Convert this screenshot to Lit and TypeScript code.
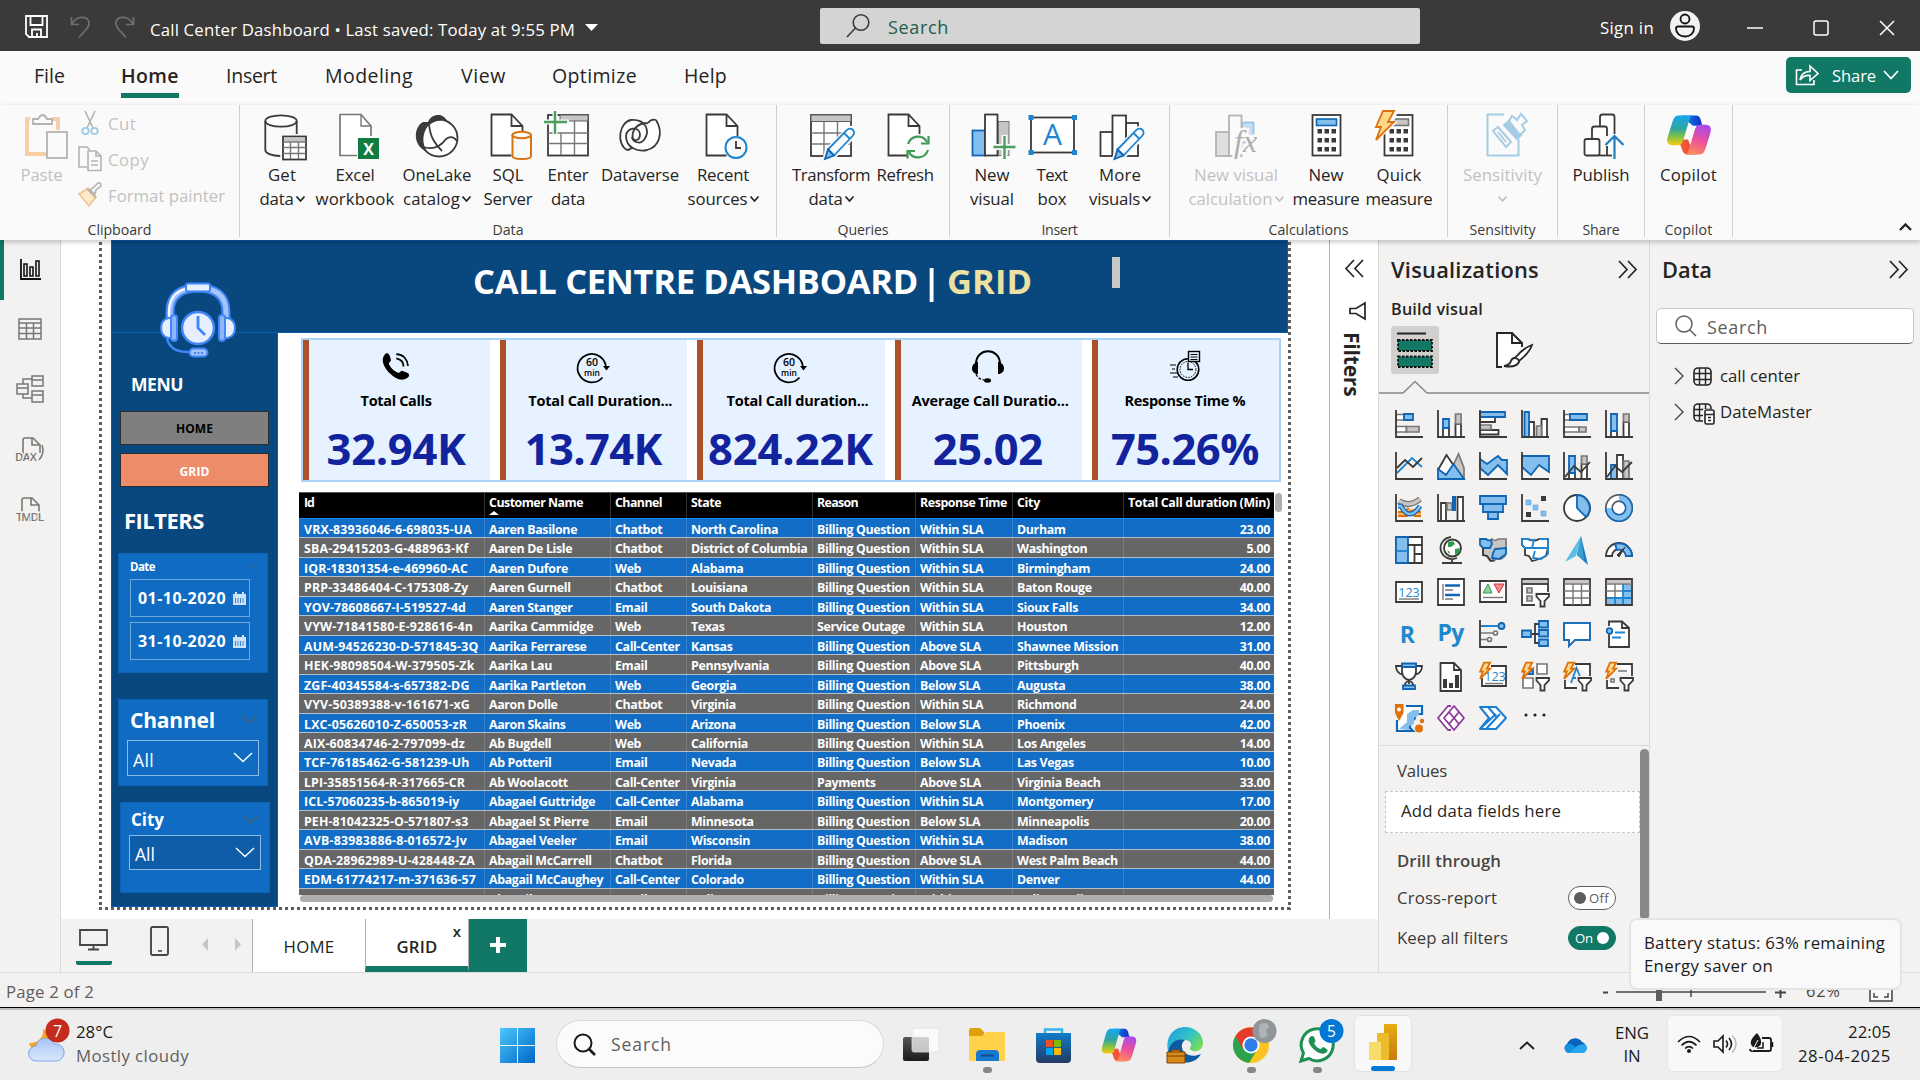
import { LitElement, html, svg, css, nothing, TemplateResult, SVGTemplateResult } from "lit";
import { customElement, property } from "lit/decorators.js";

/** Single-line label whose tracking is tuned so that it fills `w` pixels. */
@customElement("fit-text")
class FitText extends LitElement {
  @property({ type: Number }) w = 0;
  static styles = css`
    :host { display: inline-block; white-space: nowrap; flex: none; }
  `;
  async updated() {
    await document.fonts.ready;
    if (!this.w) return;
    this.style.letterSpacing = "0px";
    const n = (this.textContent || "").trim().length;
    const natural = this.getBoundingClientRect().width;
    if (n) this.style.letterSpacing = ((this.w - natural) / n).toFixed(3) + "px";
  }
  render() {
    return html`<slot></slot>`;
  }
}

const t = (text: string, w = 0, cls = "") => html`<fit-text class=${cls} .w=${w}>${text}</fit-text>`;

const icon = (w: number, h: number, body: SVGTemplateResult, cls = "", vb = "") =>
  html`<svg class="ico ${cls}" width=${w} height=${h} viewBox=${vb || `0 0 ${w} ${h}`}>${body}</svg>`;

/* ---------- shared glyph parts ---------- */
const page = (x = 8.5) => svg`<path class="dw" d="M${x + 31} 26V16L${x + 20} 4.5H${x}V45.5H${x + 20}"/><path class="d" d="M${x + 20} 4.5V16H${x + 31}"/>`;
const pencil = (dx = 0) => svg`<g transform="translate(${dx} 0)"><path fill="#fafafa" stroke="#fafafa" stroke-width="5" d="M19 49l2.500-9L42 19.500a4 4 0 0 1 6 5.500L28 46z"/><path class="s" fill="#fff" d="M22 39.500L41 20a4 4 0 0 1 6 5.500L28 45.500z"/><path class="b" d="M19 49l3-9.500 6 6z"/><path class="s" d="M38 23l6 6"/></g>`;
const bolt = (s = 1) => svg`<path transform="scale(${s})" d="M9 1H20L14 12H20L2 30L7 17H2Z" fill="#fcd98a" stroke="#e07008" stroke-width="${1.8 / s}"/>`;
const calc = (x: number, top: string, ts: string) => svg`<rect class="dw" x=${x} y="5" width="28" height="40.500"/><rect x=${x + 4} y="9" width="20" height="6.500" fill=${top} stroke=${ts} stroke-width="1.600"/>${[20, 29, 38].map((y) => [5, 12, 19].map((d) => svg`<rect x=${x + d} y=${y - 1} width="4.500" height="4.500" fill="#3b3a39"/>`))}`;
const funnel = svg`<path d="M15 16h13v3l-4.500 4.500V29h-4v-5.500L15 19z" fill="#f3f2f1" stroke="#f3f2f1" stroke-width="4"/><path class="dw" d="M15.500 16h12.500v2.500l-4.500 4.500V28.500h-4v-5.500l-4-4.500z"/>`;
const copilot = (id: string) => svg`
  <defs>
    <linearGradient id="${id}a" x1="0" y1="0" x2="0" y2="1"><stop offset="0" stop-color="#17a5f0"/><stop offset=".45" stop-color="#2fa7a0"/><stop offset=".75" stop-color="#8fc43c"/><stop offset="1" stop-color="#fcc90e"/></linearGradient>
    <linearGradient id="${id}b" x1=".6" y1="0" x2=".3" y2="1"><stop offset="0" stop-color="#a94be6"/><stop offset=".5" stop-color="#ee4f9a"/><stop offset="1" stop-color="#fd8f5c"/></linearGradient>
    <linearGradient id="${id}c"><stop offset="0" stop-color="#1b8df0"/><stop offset="1" stop-color="#0a2fc4"/></linearGradient>
    <linearGradient id="${id}d"><stop offset="0" stop-color="#f0622c"/><stop offset="1" stop-color="#f5424f"/></linearGradient>
  </defs>
  <path d="M15 1H30c3 0 4 2 5 5l1.500 6H27L20 6z" fill="url(#${id}c)"/>
  <path d="M12 27l4 11c1 3 2 5 5 5h11c-4 0-5-2-6-5l-4-11z" fill="url(#${id}d)"/>
  <path d="M13 1h15c-3 0-4 2-5 6l-6 21c-1.500 4.500-3 5-6 5H6c-5 0-6-4-5-8L6 8c1.500-5 3-7 7-7z" fill="url(#${id}a)"/>
  <path d="M33 43H18c3 0 4-2 5-6l6-21c1.500-4.500 3-5 6-5h5c5 0 6 4 5 8l-5 17c-1.500 5-3 7-7 7z" fill="url(#${id}b)"/>`;

/* ---------- ribbon ---------- */
interface Item { w: number; lines: [string, number, boolean?][]; art: SVGTemplateResult; off?: boolean }
interface Group { w: number; pad: number; label: string; lw: number; items: Item[] }

const dataGroups: Group[] = [
  {
    w: 537, pad: 8, label: "Data", lw: 31, items: [
      { w: 68, lines: [["Get", 28], ["data", 34, true]], art: svg`<ellipse class="dw" cx="24" cy="11" rx="15.700" ry="5.700"/><path class="d" d="M8.300 11V40c0 3 6 6 15 6M39.700 11v13"/><rect class="dw" x="26" y="26.500" width="23" height="23"/><rect x="27" y="27.500" width="21" height="4" fill="#c8c6c4"/><path class="g1" d="M26 32h23M26 37.500h23M26 43.500h23M33.500 32v17M41.500 32v17"/>` },
      { w: 78, lines: [["Excel", 39], ["workbook", 79]], art: svg`<path class="gw" d="M41 26V16L31 4.500H10V45.500H27"/><path class="g1" d="M31 4.500V16H41"/><rect x="28" y="28" width="21" height="21" fill="#107c41"/><text x="38.500" y="44.500" text-anchor="middle" class="xl">X</text>` },
      { w: 86, lines: [["OneLake", 69], ["catalog", 57, true]], art: svg`<circle class="dw" cx="27" cy="28" r="18.500"/><path fill="#3b3a39" d="M16 12C19 4 31 2 35 11c-7-2-13 0-19 5-6 8-6 18-1 25C2 38 0 18 11 12z"/><path class="d" d="M17 14c1 13 6 20 13 27M11 37c10 3 18-1 23-8 5-4 9-1 11 2"/>` },
      { w: 56, lines: [["SQL", 31], ["Server", 49]], art: svg`${page(8.5)}<path d="M29.500 25v21c0 4 18.500 4 18.500 0V25" fill="#fafafa" stroke="#d9730d" stroke-width="2"/><ellipse cx="38.700" cy="25" rx="9.300" ry="3.200" fill="#fff" stroke="#d9730d" stroke-width="2"/>` },
      { w: 64, lines: [["Enter", 41], ["data", 34]], art: svg`<rect class="dw" x="5" y="5" width="40" height="40.500"/><rect x="17" y="5" width="28" height="6" fill="#c8c6c4" stroke="#605e5c"/><path class="g1" d="M5 23H45M5 33.500H45M18 23V45M31.500 11V45"/><path d="M2 12H26M12 2V26" stroke="#fafafa" stroke-width="5"/><path d="M1 12H24M12 1V24" stroke="#4a9f5f" stroke-width="2.400"/>` },
      { w: 80, lines: [["Dataverse", 78]], art: svg`<path class="dw" d="M12 40C1 34 4 12 16 10c14-1 20 10 13 20-4 5-11 2-12-3 2 5 8 4 8-3-1-8-13-7-14 2 0 12 12 16 21 14 12-3 17-17 9-30M12 40c3 0 4-1 5-3"/><path class="d" d="M33 13c-12 0-17 8-15 17M41 10c-3-1-6 0-8 3"/>` },
      { w: 86, lines: [["Recent", 52], ["sources", 60, true]], art: svg`${page(8.5)}<circle cx="38" cy="37.500" r="10.500" fill="#fafafa" stroke="#1f85d0" stroke-width="2"/><path class="d" d="M38 31v7h5"/>` },
    ],
  },
  {
    w: 173, pad: 15, label: "Queries", lw: 51, items: [
      { w: 78, lines: [["Transform", 78], ["data", 34, true]], art: svg`<rect class="dw" x="5" y="5" width="40" height="41"/><rect x="5" y="5" width="40" height="6.500" fill="#c8c6c4" stroke="#605e5c"/><path class="g1" d="M5 23H45M5 34H45M18 12V45M31.500 12V45"/>${pencil()}` },
      { w: 70, lines: [["Refresh", 57]], art: svg`${page(8.5)}<circle cx="38" cy="37" r="13" fill="#fafafa"/><g fill="none" stroke="#3f9a55" stroke-width="2.200"><path d="M28 34c3-9 15-10 19-2M48 40c-3 9-15 10-19 2"/><path d="M48.500 26v7.500H41M27.500 48.500V41H35"/></g>` },
    ],
  },
  {
    w: 220, pad: 17, label: "Insert", lw: 36, items: [
      { w: 50, lines: [["New", 35], ["visual", 44]], art: svg`<rect x="5.500" y="20.500" width="12.500" height="25" class="b"/><rect x="31" y="11.500" width="11" height="34" fill="#c8c6c4" stroke="#797775"/><rect class="dw" x="18" y="4.500" width="12.500" height="41"/><path d="M25 37H50M37.500 25V50" stroke="#fafafa" stroke-width="6"/><path d="M26.500 37H48.500M37.500 26V49" stroke="#4a9f5f" stroke-width="2.400"/>` },
      { w: 70, lines: [["Text", 31], ["box", 29]], art: svg`<rect class="dw" x="4" y="7.500" width="43" height="35"/><g fill="#1f85d0"><path d="M1.500 5h5v5h-5zM45 5h5v5h-5zM1.500 40h5v5h-5zM45 40h5v5h-5z"/></g><text x="25.500" y="35" text-anchor="middle" class="bigA">A</text>` },
      { w: 66, lines: [["More", 42], ["visuals", 51, true]], art: svg`<rect class="dw" x="5.500" y="22" width="12" height="24"/><rect class="dw" x="31" y="13" width="12" height="33"/><rect class="dw" x="17.500" y="5.500" width="13.500" height="40.500"/>${pencil(0.5)}` },
    ],
  },
  {
    w: 278, pad: 11, label: "Calculations", lw: 80, items: [
      { w: 110, off: true, lines: [["New visual", 84], ["calculation", 84, true]], art: svg`<rect x="5" y="22" width="13" height="24" fill="#e1dfdd" stroke="#b5b3b1" stroke-width="1.800"/><rect x="31" y="12.500" width="11.500" height="20" fill="#c6def3" stroke="#9bc3e6" stroke-width="1.800"/><rect x="18" y="5.500" width="12.500" height="40.500" fill="#fafafa" stroke="#b5b3b1" stroke-width="1.800"/><text x="23" y="42" class="fx" stroke="#fafafa" stroke-width="5">fx</text>` },
      { w: 70, lines: [["New", 35], ["measure", 67]], art: calc(11.5, "#83beec", "#1065b5") },
      { w: 76, lines: [["Quick", 45], ["measure", 67]], art: svg`${calc(10.5, "#c8c6c4", "#797775")}<path d="M9 0H22L16 14H18L0 31" stroke="#fafafa" stroke-width="5" fill="#fafafa"/>${bolt()}` },
    ],
  },
  {
    w: 110, pad: 0, label: "Sensitivity", lw: 66, items: [
      { w: 110, off: true, lines: [["Sensitivity", 79], ["", 0, true]], art: svg`<g fill="none" stroke="#a6cde5" stroke-width="2"><path d="M26 4.500H9.500V45.500H40.500V29"/><path d="M15 21l5-4 13 15-5 5zM20 22l8 10"/><path fill="#a6cde5" d="M26 15l5-4 12 14-4 4z"/><path fill="#fafafa" d="M31 11l3-5 5 4 4-6 6 7-5 4 3 5-5 5z"/></g>` },
    ],
  },
  {
    w: 87, pad: 0, label: "Share", lw: 37, items: [
      { w: 86, lines: [["Publish", 57]], art: svg`<g class="dw"><path d="M24 17V7q0-2.500 2.500-2.500H36q2.500 0 2.500 2.500V24"/><path d="M16 28V19q0-2.500 2.500-2.500H29q2 0 2 2.500V26M31 36v9.500"/><rect x="8.500" y="29" width="15" height="16.500" rx="2"/><path d="M23 45.500H36"/></g><path d="M38.500 49V26M29.500 35l9-9 9 9" fill="none" stroke="#1f7fc0" stroke-width="2.200"/>` },
    ],
  },
  {
    w: 88, pad: 0, label: "Copilot", lw: 48, items: [
      { w: 87, lines: [["Copilot", 57]], art: svg`<g transform="translate(2.500 4.500) scale(.98 .93)">${copilot("rb")}</g>` },
    ],
  },
];

/* ---------- gallery of visuals, 28px cells ---------- */
const ax = svg`<path class="d" d="M1 0V27H28"/>`;
const visuals: SVGTemplateResult[] = [
  svg`<path class="gw" d="M1 4.500H9V10H1zM1 16.500H11.500V22H1z"/><path class="b" d="M9 4H18V10H9z"/><path class="gf" d="M11.500 16.500H24V22H11.500z"/>${ax}`,
  svg`<path class="dw" d="M6 17H12V27H6zM18.500 14H24V27H18.500z"/><path class="b" d="M6 9H12V18H6z"/><path class="gf" d="M18.500 4H24V14H18.500z"/>${ax}`,
  svg`<path class="dw" d="M1 7H16V12H1zM1 20H19.500V24.500H1z"/><path class="gf" d="M1 15H12V19.500H1z"/><path class="b" d="M1 2H26V7H1z"/>${ax}`,
  svg`<path class="dw" d="M8 12H13V27H8zM20.500 9H26V27H20.500z"/><path class="gf" d="M15.500 16H20.500V27H15.500z"/><path class="b" d="M3.500 2H8V27H3.500z"/>${ax}`,
  svg`<path class="gw" d="M1 4.500H7V10H1zM1 17H16V22H1z"/><path class="b" d="M7 4H24V10H7z"/><path class="gf" d="M16 17H23V22H16z"/>${ax}`,
  svg`<path class="dw" d="M6 21H12V27H6zM18.500 12H24V27H18.500z"/><path class="b" d="M6 4H12V21H6z"/><path class="gf" d="M18.500 4H24V12H18.500z"/>${ax}`,
  svg`<path class="s" d="M2 21L17 6 27 15"/><path class="d" d="M2 16L10 8 18 15 27 6"/>${ax}`,
  svg`<path class="gf" d="M15 16L21.500 2 27 16V26z"/><path class="dw" d="M1 18L9.500 3 17 14 9 23z"/><path class="b" d="M1 17L9 23 16.500 12 27 27H1z"/>`,
  svg`<path class="b" d="M1 7L8 12 19 4 23 8H28V22L19 13 9 23 1 16z"/>${ax}`,
  svg`<path class="b" d="M1 4H28V20L18 13 10 23 1 15z"/>${ax}`,
  svg`<path class="dw" d="M6 21H12V27H6zM18.500 12H24V27H18.500z"/><path class="b" d="M6 4H12V21H6z"/><path class="gf" d="M18.500 4H24V12H18.500z"/><path class="d" d="M2 25L11 14 18 20 27 10"/>${ax}`,
  svg`<path class="b" d="M6 13H12V27H6z"/><path class="dw" d="M12 3H18V27H12z"/><path class="gf" d="M18.500 9H24V27H18.500z"/><path class="d" d="M2 25L10 14 17 20 27 10"/>${ax}`,
  svg`<path d="M3 20H11L15 15M19 15L21 20H26" fill="none" stroke="#e07008" stroke-width="6"/><path d="M3 20H11L15 15M19 15L21 20H26" fill="none" stroke="#fbb65c" stroke-width="2"/><path d="M4 7Q14 14 25 5" fill="none" stroke="#797775" stroke-width="6"/><path d="M4 7Q14 14 25 5" fill="none" stroke="#c8c6c4" stroke-width="3.500"/><path d="M3 12H6Q10 20 15 20T25 12" fill="none" stroke="#1065b5" stroke-width="5"/><path d="M3 12H6Q10 20 15 20T25 12" fill="none" stroke="#83beec" stroke-width="2.500"/>${ax}`,
  svg`<path class="dw" d="M4 9H9V27H4zM20.500 3H26V27H20.500z"/><path class="gf" d="M10 9H15V16H10z"/><path d="M15 2H19V17H15z" fill="#1065b5"/>${ax}`,
  svg`<path class="b" d="M1 2H27V10H1z"/><path class="b" d="M4 10H24V18H4z"/><path class="b" d="M9 18H19V25H9z"/>`,
  svg`<path d="M20 2h5v5h-5zM5 18h5v5H5z" fill="#3b3a39"/><path d="M5 6h5v5H5zM12 11h5v5h-5zM20 17h5v5h-5z" fill="#83beec" stroke="#5aa3df" stroke-width=".6"/>${ax}`,
  svg`<circle class="dw" cx="14" cy="14" r="13"/><path class="b" d="M14 14V1A13 13 0 0 1 23 23z"/>`,
  svg`<circle cx="14" cy="14" r="10" fill="#fff" stroke="#605e5c" stroke-width="8"/><circle cx="14" cy="14" r="10" fill="none" stroke="#fff" stroke-width="4.600"/><path d="M14 4A10 10 0 1 1 4 14" fill="none" stroke="#1065b5" stroke-width="8"/><path d="M14 4A10 10 0 1 1 4 14" fill="none" stroke="#83beec" stroke-width="5"/>`,
  svg`<path class="dw" d="M1 1H27V27H1z"/><path class="b" d="M1 1H13V27H1z"/><path class="d" d="M13 9H27M19.500 9V27M19.500 18H27"/><path class="s" d="M1 15H13"/>`,
  svg`<circle cx="15.500" cy="12" r="8.500" class="dw"/><path d="M11 6l5-1 2 3-4 3-3 0zM18 13l5-1-1 5-4 2zM10 14l3 2-1 2z" fill="#2f9a4c"/><path class="d" d="M14 1C6 2 2 9 4 15s9 10 16 7M15 23v3M5 27H25"/>`,
  svg`<path class="gf" d="M13 3Q16 6 19 3H27V12L26 20 22 23 18 22 15 25 11 25 8 20 4 19V12z"/><path class="b" d="M1 3H7Q9 5 12 4L13 8 11 12H4L1 9z"/><path class="b" d="M16 13L27 12V18L20 23 13 22 14 17z"/><path class="d" d="M4 12V19L8 20 12 25 15 24"/>`,
  svg`<path class="dw" d="M1 3H7Q14 6 18 3H27V12L25 20 21 22 15 24 11 25 8 20 4 19V12L1 9z"/><path class="s" d="M1 3H7Q9 5 13 4L11 12H4L1 9V3M11 12H27M18 3H27V18L20 23 12 22L14 15"/>`,
  svg`<path d="M18 0L13 20 2 26z" fill="#59bfe6"/><path d="M18 0L14 19 25 29z" fill="#1f7cc8"/><path d="M14 19L18 0 21 24z" fill="#3aa0d0"/>`,
  svg`<path class="dw" d="M1 20A13 13 0 0 1 27 20H21A7 7 0 0 0 7 20z"/><path class="b" d="M10 8A13 13 0 0 1 27 20H21A7 7 0 0 0 12 14z"/><path d="M20 11L14 21 12 19z" fill="#3b3a39" stroke="#3b3a39"/>`,
  svg`<path class="dw" d="M1 4H27V24H1z"/><text x="14" y="18.500" text-anchor="middle" class="n123">123</text><path class="g1" d="M4 21H24"/>`,
  svg`<path class="dw" d="M1 1H27V27H1z"/><path d="M6 6V22" class="g1"/><path d="M8 7.500H23M8 17H23" stroke="#1065b5" stroke-width="2.500"/><path class="g1" d="M8 12H16M8 21H16"/>`,
  svg`<path class="dw" d="M1 3H27V24H1z"/><path d="M4 15L9 6l4 9z" fill="#8ed09c" stroke="#2f9a4c"/><path d="M15 6h10l-5 9z" fill="#f28b8b" stroke="#d13438"/><path class="g1" d="M4 19.500H24"/>`,
  svg`<path class="dw" d="M14 27H1V1H27V14"/><path d="M1.500 2H26.500V6H1.500z" fill="#c8c6c4"/><path class="d" d="M1 6H27"/><path class="gf" d="M6 10h5v5H6zM6 18h5v5H6z"/>${funnel}`,
  svg`<path class="dw" d="M1 1H27V27H1z"/><path d="M2 2H26V5.500H2z" fill="#c8c6c4"/><path class="g1" d="M1 6H27M1 13H27M1 20H27M10 6V27M18.500 6V27"/>`,
  svg`<path class="dw" d="M1 1H27V27H1z"/><path d="M2 2H26V5.500H2z" fill="#c8c6c4"/><path d="M18 6H26V26H2V20H18z" fill="#83beec"/><path class="g1" d="M1 6H27M1 13H18M10 6V20"/><path class="s" d="M2 20H26M18 6V26M18 13H26M10 20V26"/>`,
  svg`<text x="12" y="22.500" text-anchor="middle" class="rpy">R</text>`,
  svg`<text x="13.500" y="20.500" text-anchor="middle" class="rpy">Py</text>`,
  svg`${ax}<path d="M2 6H20" stroke="#1f85d0" stroke-width="2"/><circle class="b" cx="22.500" cy="6" r="3"/><path class="g1" d="M2 13H14M2 19.500H8"/><circle class="gw" cx="16.500" cy="13" r="2"/><circle class="gw" cx="10.500" cy="19.500" r="2"/>`,
  svg`<path class="d" d="M10 14H18M18 4H14V23H18M14 14H18"/><path class="b" d="M1 10.500H10V17H1zM18 1H27V7.500H18zM18 10H27V16.500H18zM18 19.500H27V26H18z"/>`,
  svg`<path d="M1 3H27V20H12L6 26V20H1z" fill="#fff" stroke="#1f6fb8" stroke-width="2"/>`,
  svg`<path class="dw" d="M4 6V1.500H17L24 8V27H4V14"/><path class="d" d="M17 1.500V8H24"/><circle class="b" cx="4.500" cy="11" r="2.800"/><path class="s" d="M10 12.500H20M7 17.500H16"/>`,
  svg`<path class="dw" d="M7 2H21V10Q20 17 14 18 8 17 7 10zM7 4H1Q1 11 8 13M21 4H27Q27 11 20 13"/><path class="d" d="M14 18V22"/><path class="b" d="M7 1.500H21V5H7zM8 23.500H20V27H8z"/><path class="d" d="M10 23Q10 20 14 19 18 20 18 23"/>`,
  svg`<path class="dw" d="M3.500 1H17L24 8V29H3.500z"/><path class="d" d="M17 1V8H24"/><path d="M6 17h4v9H6zM12 21h4v5h-4zM18 13h4v13h-4z" fill="#3b3a39"/>`,
  svg`<path class="dw" d="M12 4H27V24H3V16"/><text x="16" y="19" text-anchor="middle" class="n123">123</text><path class="g1" d="M6 21.500H24"/>${bolt(0.56)}`,
  svg`<path class="gw" d="M16 2H26V12H16zM2 16H12V26H2zM16 16H20"/><path class="b" d="M6 12L12 7V12z"/>${funnel}${bolt(0.56)}`,
  svg`<path class="dw" d="M12 2H27V14M2 18V26H14"/><path class="s" d="M8 21L13.500 6 18 17M10 16H16"/>${funnel}${bolt(0.56)}`,
  svg`<path class="dw" d="M12 2H27V14M2 18V26H14"/><path class="g1" d="M13 9H22M13 18H15"/><path class="gw" d="M6 17h3v3H6z"/>${funnel}${bolt(0.56)}`,
  svg`<path d="M2 16V27H18L15 24V20L20 14V10H27V2H11" fill="#fff" stroke="#1065b5" stroke-width="2.200"/><path d="M4 25L12 18V10L18 6H24V11L19 14V20L14 22V26" fill="#83beec"/><path d="M0 0H8.500V9L4 17 0 9z" fill="#e07008"/><circle cx="4" cy="5.500" r="2" fill="#fff"/><circle cx="24" cy="24.500" r="4" fill="#e07008"/><circle cx="27" cy="17" r="2.200" fill="#e07008"/>`,
  svg`<g fill="#fff" stroke="#8b3a9b" stroke-width="1.800" stroke-linejoin="round"><path d="M14 2H11L1 14 11 26H14"/><path d="M17 2L27 14 17 26 7 14z"/><path d="M12 8L22 20M22 8L12 20"/></g>`,
  svg`<g fill="#fff" stroke="#1a7fd4" stroke-width="2" stroke-linejoin="round"><path d="M1 3H17L27 14 17 25H1L10 14z"/><path d="M9 3L18 13.500M1 25L17 10M7 25L21 10"/></g>`,
  svg`<g fill="#252423"><circle cx="5" cy="11" r="1.600"/><circle cx="14" cy="11" r="1.600"/><circle cx="23" cy="11" r="1.600"/></g>`,
];

/* ---------- report table ---------- */
const columns: [string, number, number][] = [
  ["Id", 186, 10], ["Customer Name", 126, 94], ["Channel", 76, 47], ["State", 126, 30],
  ["Reason", 103, 41], ["Response Time", 97, 87], ["City", 111, 23], ["Total Call duration (Min)", 150, 142],
];
const BQ = "Billing Question";
const W = "Within SLA", A = "Above SLA", B = "Below SLA";
const rows: string[][] = [
  ["VRX-83936046-6-698035-UA", "Aaren Basilone", "Chatbot", "North Carolina", BQ, W, "Durham", "23.00"],
  ["SBA-29415203-G-488963-Kf", "Aaren De Lisle", "Chatbot", "District of Columbia", BQ, W, "Washington", "5.00"],
  ["IQR-18301354-e-469960-AC", "Aaren Dufore", "Web", "Alabama", BQ, W, "Birmingham", "24.00"],
  ["PRP-33486404-C-175308-Zy", "Aaren Gurnell", "Chatbot", "Louisiana", BQ, W, "Baton Rouge", "40.00"],
  ["YOV-78608667-I-519527-4d", "Aaren Stanger", "Email", "South Dakota", BQ, W, "Sioux Falls", "34.00"],
  ["VYW-71841580-E-928616-4n", "Aarika Cammidge", "Web", "Texas", "Service Outage", W, "Houston", "12.00"],
  ["AUM-94526230-D-571845-3Q", "Aarika Ferrarese", "Call-Center", "Kansas", BQ, A, "Shawnee Mission", "31.00"],
  ["HEK-98098504-W-379505-Zk", "Aarika Lau", "Email", "Pennsylvania", BQ, A, "Pittsburgh", "40.00"],
  ["ZGF-40345584-s-657382-DG", "Aarika Partleton", "Web", "Georgia", BQ, B, "Augusta", "38.00"],
  ["VYV-50389388-v-161671-xG", "Aaron Dolle", "Chatbot", "Virginia", BQ, W, "Richmond", "24.00"],
  ["LXC-05626010-Z-650053-zR", "Aaron Skains", "Web", "Arizona", BQ, B, "Phoenix", "42.00"],
  ["AIX-60834746-2-797099-dz", "Ab Bugdell", "Web", "California", BQ, W, "Los Angeles", "14.00"],
  ["TCF-76185462-G-581239-Uh", "Ab Potteril", "Email", "Nevada", BQ, B, "Las Vegas", "10.00"],
  ["LPI-35851564-R-317665-CR", "Ab Woolacott", "Call-Center", "Virginia", "Payments", A, "Virginia Beach", "33.00"],
  ["ICL-57060235-b-865019-iy", "Abagael Guttridge", "Call-Center", "Alabama", BQ, W, "Montgomery", "17.00"],
  ["PEH-81042325-O-571807-s3", "Abagael St Pierre", "Email", "Minnesota", BQ, B, "Minneapolis", "20.00"],
  ["AVB-83983886-8-016572-Jv", "Abagael Veeler", "Email", "Wisconsin", BQ, W, "Madison", "38.00"],
  ["QDA-28962989-U-428448-ZA", "Abagail McCarrell", "Chatbot", "Florida", BQ, A, "West Palm Beach", "44.00"],
  ["EDM-61774217-m-371636-57", "Abagail McCaughey", "Call-Center", "Colorado", BQ, W, "Denver", "44.00"],
  ["LGD-68412393-S-544308-SS", "Abagail McKern", "Email", "Indiana", BQ, W, "Indianapolis", "31.00"],
];
const idWidths = [168, 164.5, 164, 164.5, 162, 169, 174.5, 170.5, 165.5, 166, 163, 161, 165.5, 161, 155.5, 164.5, 163, 171, 172, 164];

/* ---------- KPI cards ---------- */
const sixty = svg`<path d="M29 18A14.200 14.200 0 1 0 25.500 27.500" fill="none" stroke="#000" stroke-width="1.800"/><path d="M26 16h7l-3.500 4.500z"/><text x="15" y="16" text-anchor="middle" class="k60">60</text><text x="15" y="25.500" text-anchor="middle" class="kmin">min</text>`;
const kpis: { title: string; tw: number; value: string; vw: number; shift: number; art: SVGTemplateResult }[] = [
  { title: "Total Calls", tw: 71, value: "32.94K", vw: 139, shift: 0, art: svg`<g transform="translate(1 2) scale(.9)"><path d="M4 3c3-3 5-1 6 2l1 4c0 2-3 3-2 5 3 5 5 7 10 9 2 1 3-3 5-2l5 2c3 1 3 4 0 6-6 4-13 1-19-5S-1 9 4 3z"/><path d="M17 7c5 1 8 4 8 9M17 2.500c8 0 12.500 6 13 13" fill="none" stroke="#000" stroke-width="2"/></g>` },
  { title: "Total Call Duration...", tw: 144, value: "13.74K", vw: 137, shift: 14, art: sixty },
  { title: "Total Call duration...", tw: 142, value: "824.22K", vw: 165, shift: 14, art: sixty },
  { title: "Average Call Duratio...", tw: 157, value: "25.02", vw: 110, shift: 5, art: svg`<path d="M4 14C4-3 28-3 28 14" fill="none" stroke="#000" stroke-width="2"/><path d="M6 12v12C-2 24-2 13 6 12zM26 12v12c8 0 8-11 0-12z"/><path d="M4 24q2 5 8 6" fill="none" stroke="#000" stroke-dasharray="3 1.500" stroke-width="1.200"/><ellipse cx="15.500" cy="30.500" rx="3.500" ry="2.200"/>` },
  { title: "Response Time %", tw: 121, value: "75.26%", vw: 148, shift: 0, art: svg`<g fill="none" stroke="#000" transform="translate(1 0)"><circle cx="18" cy="19.500" r="10.800" stroke-width="1.500"/><circle cx="18" cy="19.500" r="8" stroke-width="1" stroke-dasharray="1.500 1.200"/><path d="M18 12.500v7h5" stroke-width="1.300"/><path d="M0 15H6M2 19H5M0 23H7M3 27H8" stroke-width="1.200"/><rect x="18.500" y="1.500" width="11" height="10" fill="#e6f2ff" stroke-width="1.400"/><path d="M20.500 4.500h7M20.500 7h7M20.500 9.500h7"/></g>` },
];

const chev = (w: number, h: number, color: string, sw = 1.5) =>
  icon(w, h, svg`<path d="M1 1L${w / 2} ${h - 1.5}L${w - 1} 1" fill="none" stroke=${color} stroke-width=${sw}/>`);
const calIcon = icon(13, 13, svg`<path d="M0 2H13V13H0z" fill="#cfe3f7"/><path d="M2 0h2v2H2zM9 0h2v2H9z" fill="#cfe3f7"/><path d="M2.500 6v5M5 6v5M7.500 6v5M10 6v5" stroke="#3d83c9" stroke-width="1"/>`);

@customElement("app-root")
class AppRoot extends LitElement {
  static styles = css`
    :host { display: block; width: 1920px; height: 1080px; overflow: hidden; font-family: "Open Sans", "Noto Sans", sans-serif; font-size: 16.8px; color: #252423; background: #f3f2f1; }
    * { box-sizing: border-box; }
    .app { display: flex; flex-direction: column; width: 1920px; height: 1080px; }
    .ico { display: block; flex: none; overflow: visible; }
    .row { display: flex; align-items: center; }
    .d { fill: none; stroke: #3b3a39; stroke-width: 1.8; }
    .dw { fill: #fff; stroke: #3b3a39; stroke-width: 1.8; }
    .g1 { fill: none; stroke: #797775; stroke-width: 1.4; }
    .gw { fill: #fff; stroke: #797775; stroke-width: 1.7; }
    .gf { fill: #c8c6c4; stroke: #797775; stroke-width: 1.7; }
    .b { fill: #83beec; stroke: #1065b5; stroke-width: 1.8; }
    .s { fill: none; stroke: #1f85d0; stroke-width: 1.8; }
    .xl { font: 700 16px "Open Sans", sans-serif; fill: #fff; }
    .bigA { font: 400 30px "Open Sans", sans-serif; fill: #1f85d0; }
    .fx { font: italic 32px "Liberation Serif", serif; fill: #b0aeac; paint-order: stroke; }
    .n123 { font: 400 12.5px "Open Sans", sans-serif; fill: #1f85d0; }
    .rpy { font: 700 23px "Open Sans", sans-serif; fill: #2187cf; letter-spacing: -0.8px; }
    .k60 { font: 600 10.5px "Open Sans", sans-serif; }
    .kmin { font: 600 8.5px "Open Sans", sans-serif; }

    /* title bar */
    .title { height: 51px; background: #3b3a39; color: #fff; display: flex; align-items: center; flex: none; }
    .title .save { margin: 2px 0 0 25px; }
    .title .undo { margin: 3px 0 0 22px; }
    .title .redo { margin: 3px 0 0 23px; }
    .title .name { margin: 7px 0 0 15px; }
    .title .caret { margin: 3px 0 0 10px; }
    .title .search { margin-left: 222px; margin-top: 1px; width: 600px; height: 36px; background: #d4d4d2; border-radius: 2px; color: #1f5c4f; font-size: 18px; padding-left: 26px; gap: 18px; }
    .title .search fit-text { margin-top: 2px; }
    .title .sign { margin: 3px 0 0 180px; }
    .title .avatar { margin-left: 16px; margin-top: 1px; }
    .title .wmin { margin: 4px 0 0 47px; }
    .title .wmax { margin: 5px 0 0 50px; }
    .title .wclose { margin: 5px 0 0 50px; }

    /* tabs */
    .menu { height: 54px; background: #fafafa; display: flex; flex: none; font-size: 19.5px; }
    .tab { height: 47px; line-height: 49px; }
    .tab.on { font-weight: 600; border-bottom: 5px solid #117865; }
    .share { margin: 6px 9px 0 auto; width: 125px; height: 36px; border-radius: 5px; background: #117865; color: #fff; padding-left: 9px; font-size: 16.5px; }
    .share fit-text { margin: 0 7px 0 13px; }

    /* ribbon */
    .ribbon { height: 135px; background: #fafafa; display: flex; flex: none; position: relative; z-index: 2; box-shadow: 0 2px 5px rgba(0, 0, 0, 0.22); }
    .grp { border-right: 1px solid #d2d0ce; height: 132px; display: flex; flex-direction: column; justify-content: space-between; }
    .items { display: flex; padding-top: 5px; }
    .item { display: flex; flex-direction: column; align-items: center; }
    .item .ln { height: 24px; gap: 2px; line-height: 24px; font-size: 16.8px; justify-content: center; white-space: nowrap; }
    .item .ln:first-of-type { margin-top: 3px; }
    .off { color: #c3c1bf; }
    .glabel { font-size: 14.2px; height: 14px; line-height: 14px; text-align: center; color: #3b3a39; }
    .clip { width: 240px; }
    .clip .cols { display: flex; padding-top: 5px; }
    .clip .paste { width: 78px; padding-left: 12px; }
    .clip .paste .ico { position: relative; left: -1px; }
    .clip .paste .ln { margin-left: -7px; line-height: 24px; margin-top: 3px; }
    .clip .acts .row { height: 36px; gap: 6px; }
    .clip .acts { margin-top: -5px; }
    .collapse { margin: 118px 0 0 166px; }

    /* workspace */
    .work { display: flex; height: 733px; flex: none; border-bottom: 1px solid #dcdad8; }
    .rail { width: 61px; border-right: 1px solid #dcdad8; background: #f3f2f1; }
    .rail .slot { height: 60px; display: flex; align-items: center; justify-content: center; padding-bottom: 2px; }
    .rail .slot.on { border-left: 4px solid #117865; padding-right: 4px; }
    .rail .lbl { font: 600 11.5px "Open Sans", sans-serif; fill: #797775; stroke: #f3f2f1; stroke-width: 3; paint-order: stroke; }
    .center { width: 1317px; display: flex; flex-direction: column; }
    .stage { display: flex; height: 679px; background: #fff; }
    .dots {
      margin-left: 38px; width: 1192px; height: 670px; padding: 0 3px 3px 12px;
      background:
        repeating-linear-gradient(180deg, transparent 0 2px, #605e5c 2px 5px, transparent 5px 6px) 0 0 / 3px 100% no-repeat,
        repeating-linear-gradient(180deg, transparent 0 2px, #605e5c 2px 5px, transparent 5px 6px) 100% 0 / 3px 100% no-repeat,
        repeating-linear-gradient(90deg, #605e5c 0 3px, transparent 3px 6px) 0 100% / 100% 3px no-repeat;
    }
    .report { height: 667px; display: flex; flex-direction: column; position: relative; }
    .banner { height: 93px; background: #09477f; border: 1px solid #0b5aac; display: flex; flex: none; align-items: flex-start; color: #fff; font-weight: 700; font-size: 34.5px; line-height: 50px; padding: 15px 0 0 361px; white-space: nowrap; }
    .banner .sp1 { margin-left: 4px; }
    .banner .gold { color: #ece1a3; margin-left: 6px; }
    .banner .bar { width: 8px; height: 31px; background: #c8c8c8; margin: 1px 0 0 80px; }
    .rbody { display: flex; height: 574px; }
    .side { width: 167px; background: #09477f; border: 1px solid #0b5aac; border-top: 0; color: #fff; font-weight: 700; position: relative; }
    .logo { position: absolute; left: 49px; top: 42px; z-index: 1; }
    .side .mh { font-size: 17.5px; padding: 38px 0 0 19px; height: 78px; line-height: 26px; }
    .side .btn { width: 149px; height: 34px; margin-left: 8px; border: 1px solid #2d2d2d; display: flex; align-items: center; justify-content: center; font-size: 12px; }
    .side .home { background: #7f7f7f; color: #000; }
    .side .grid { background: #ec8c69; margin-top: 8px; padding-top: 2px; }
    .side .fh { font-size: 22px; line-height: 30px; padding: 18px 0 0 12px; height: 66px; }
    .fcard { background: #0f6cc2; border: 1px solid #0c62b4; width: 150px; margin-left: 6px; }
    .fcard .row.h { justify-content: space-between; }
    .date { height: 120px; padding: 2px 0 0 11px; }
    .date .h { height: 23px; font-size: 11.5px; padding: 0 10px 2px 0; }
    .date .in { width: 120px; height: 38px; border: 1px solid #6fa8dc; margin-bottom: 5px; padding-left: 7px; gap: 7px; font-size: 16px; }
    .chan { height: 87px; margin-top: 26px; padding: 5px 0 0 9px; }
    .chan .h { height: 35px; font-size: 21px; padding: 0 10px 6px 2px; }
    .chan .sel { margin-left: -1px; }
    .city { height: 91px; margin: 16px 0 0 8px; padding: 4px 0 0 8px; }
    .city .h { height: 28px; font-size: 17px; padding: 0 10px 4px 2px; }
    .sel { width: 132px; height: 36px; border: 1px solid #8cbbe6; font-weight: 400; font-size: 17.5px; padding: 3px 5px 0 5px; display: flex; align-items: center; justify-content: space-between; }
    .sel .ico { margin-bottom: 4px; }
    .city .sel { background: #0f5da9; height: 35px; }
    .main { padding: 5px 0 0 21px; width: 1010px; }
    .kpis { width: 980px; height: 144px; margin-left: 2px; border: 2px solid #a9d3f8; display: grid; grid-template-columns: repeat(5, 1fr); gap: 10px; background: #fff; }
    .kpi { background: #e6f2ff; border-left: 6px solid #ad5128; padding: 10px 7px 0 0; display: flex; flex-direction: column; align-items: center; color: #000; font-weight: 700; }
    .kpi .kt { margin-top: 8px; font-size: 14.5px; line-height: 20px; }
    .kpi .kv { margin-top: 13px; font-size: 43.5px; line-height: 50px; color: #12239e; }
    .tblwrap { display: flex; margin-top: 10px; gap: 1px; }
    .tbl { width: 975px; height: 403px; overflow: hidden; font-weight: 700; color: #fff; font-size: 12.4px; }
    .tr { display: flex; height: 19.46px; }
    .tr.head { height: 27px; background: #000; border-bottom: 1px solid #118dff; border-top: 1px solid #555; }
    .tr.head .c { border-right-color: #333; line-height: 20px; }
    .tr.r0 { background: #116dc5; }
    .tr.r1 { background: #666; }
    .tr:not(.head) { border-bottom: 1px solid #b5bfca; }
    .c { padding-left: 4px; border-right: 1px solid rgba(255, 255, 255, 0.15); white-space: nowrap; line-height: 21px; flex: none; letter-spacing: -0.35px; }
    .c:first-child { padding-left: 5px; }
    .c.num { text-align: right; padding-right: 4px; border-right: 0; letter-spacing: -0.3px; }
    .tr.head .c.num { padding-right: 5px; }
    .sort { width: 0; height: 0; border: 5px solid transparent; border-top: 0; border-bottom: 4px solid #fff; margin-top: -2px; }
    .vs { width: 7px; height: 19px; border-radius: 4px; background: #b0aeac; margin-top: 1px; }
    .hs { width: 973px; height: 7px; border-radius: 4px; background: #b0aeac; margin-left: 1px; }

    .filters { width: 49px; margin-left: 38px; border-left: 1px solid #b3b0ad; display: flex; flex-direction: column; align-items: flex-start; }
    .filters .ar { margin: 19px 0 0 15px; }
    .filters .fn { margin: 24px 0 0 19px; }
    .filters .vt { writing-mode: vertical-rl; font-weight: 700; font-size: 21px; line-height: 24px; margin: 12px 0 0 10px; letter-spacing: -0.2px; }

    .pages { height: 53px; display: flex; background: #f3f2f1; }
    .pages .dev { width: 36px; margin-left: 15px; height: 46px; border-bottom: 4px solid #117865; border-radius: 2px; padding: 10px 0 0 3px; }
    .pages .ph { margin: 7px 0 0 38px; }
    .pages .a1 { margin: 19px 0 0 33px; }
    .pages .a2 { margin: 19px 0 0 27px; }
    .pages .pg { background: #fff; height: 53px; border-left: 1px solid #b3b0ad; display: flex; align-items: center; justify-content: center; position: relative; }
    .pages .p1 { width: 113px; margin-left: 11px; padding-top: 1px; }
    .pages .p2 { width: 104px; border-bottom: 6px solid #117865; font-weight: 600; padding-top: 7px; border-right: 1px solid #b3b0ad; }
    .pages .x { position: absolute; right: 7px; top: 2px; font-size: 15px; font-weight: 600; }
    .pages .add { width: 58px; background: #117865; display: flex; align-items: center; justify-content: center; padding-bottom: 2px; }

    .pane { width: 271px; border-left: 1px solid #dcdad8; background: #f3f2f1; }
    .pane h2 { margin: 0; font-size: 21.8px; font-weight: 600; height: 60px; display: flex; align-items: center; justify-content: space-between; padding: 0 12px 2px 12px; }
    .build { font-weight: 600; font-size: 16.2px; padding-left: 12px; height: 26px; line-height: 18px; }
    .modes { display: flex; padding-left: 12px; height: 48px; }
    .mode { width: 48px; height: 48px; background: #d2d0ce; border-radius: 3px; padding: 6px; }
    .modes .fmt { margin: 6px 0 0 57px; }
    .notch { margin-top: 7px; }
    .gallery { display: grid; grid-template-columns: repeat(6, 28px); grid-auto-rows: 28px; gap: 14px; padding: 16px 0 0 16px; height: 352px; border-bottom: 1px solid #dcdad8; }
    .wells { display: flex; height: 226px; }
    .wl { width: 261px; font-size: 16.8px; color: #3b3a39; }
    .wl .v { padding: 13px 0 0 18px; height: 45px; }
    .drop { margin-left: 6px; width: 255px; height: 42px; background: #fff; border: 1px dashed #c8c6c4; padding: 0 0 4px 15px; display: flex; align-items: center; color: #252423; }
    .drill { font-weight: 600; padding: 16px 0 0 18px; height: 45px; line-height: 24px; color: #484644; }
    .tg { display: flex; height: 40px; align-items: center; justify-content: space-between; padding: 0 24px 0 18px; }
    .tg > fit-text { margin-bottom: 2px; }
    .sw { width: 48px; height: 24px; border-radius: 12px; border: 1px solid #605e5c; background: #fff; display: flex; align-items: center; padding: 0 5px; gap: 3px; font-size: 13.2px; color: #605e5c; }
    .sw i { width: 12px; height: 12px; border-radius: 50%; background: #605e5c; }
    .sw.on { background: #117865; border-color: #117865; color: #fff; padding-left: 6px; gap: 4px; }
    .sw.on i { background: #fff; }
    .wsb { width: 9px; height: 171px; border-radius: 5px; background: #8a8886; margin-top: 3px; }
    .dsearch { margin: 8px 6px 0 6px; height: 36px; border: 1px solid #c8c6c4; border-bottom: 1.5px solid #605e5c; border-radius: 5px; background: #fff; color: #605e5c; font-size: 18px; padding-left: 18px; gap: 10px; }
    .dsearch fit-text { margin-top: 2px; }
    .tree { padding: 14px 0 0 24px; }
    .tree .row { height: 36px; gap: 9px; font-size: 16.8px; }
    .tree fit-text { margin: 0 0 1px -1px; }

    .status { height: 34px; display: flex; align-items: center; padding: 2px 27px 0 6px; color: #605e5c; flex: none; }
    .status .sl { margin: 1px 0 0 auto; }
    .tip { position: absolute; left: 1629px; top: 918px; width: 273px; height: 72px; border: 2px solid #e4e4e4; border-radius: 8px; background: #f9f9f9; padding: 11px 0 0 13px; font-size: 16.8px; line-height: 23px; color: #1b1b1b; z-index: 4; }

    .task { height: 73px; border-top: 1px solid #000; box-shadow: inset 0 2px 0 #bdbdbd; background: #eeeeee; display: flex; align-items: center; padding-top: 2px; flex: none; color: #1b1b1b; }
    .wx { width: 484px; gap: 11px; padding-left: 29px; }
    .wx .ico { margin-top: -1px; }
    .two { display: flex; flex-direction: column; align-items: flex-start; line-height: 24px; font-size: 16.8px; margin-top: -2px; }
    .mut { color: #5f5f5f; }
    .slot66 { width: 66px; height: 70px; display: flex; align-items: center; justify-content: center; position: relative; }
    .slot66 .dot { position: absolute; left: 29px; top: 57px; width: 9px; height: 6px; border-radius: 4px; background: #868686; }
    .tsearch { width: 328px; height: 48px; margin: -2px 4px 0 6px; border-radius: 24px; border: 1.5px solid #d9d9d9; border-bottom-color: #c4c4c4; background: #fbfbfb; padding-left: 16px; gap: 15px; font-size: 17.5px; color: #5f5f5f; }
    .tile { width: 58px; height: 57px; border-radius: 6px; background: #f8f8f8; border: 1px solid #e2e2e2; display: flex; flex-direction: column; align-items: center; justify-content: flex-end; gap: 6px; margin-top: -3px; }
    .tile b { width: 24px; height: 5px; border-radius: 3px; background: #0078d4; }
    .slot48 { width: 48px; display: flex; justify-content: center; }
    .two.lang { width: 66px; align-items: center; margin-right: 2px; line-height: 23px; }
    .quick { width: 116px; height: 57px; margin-top: -3px; border-radius: 6px; background: #f8f8f8; border: 1px solid #e6e6e6; justify-content: center; gap: 12px; }
    .two.clock { width: 108px; align-items: flex-end; }
  `;

  private titleBar() {
    return html`<div class="title">
      ${icon(23, 23, svg`<path d="M1 1H22V22H4L1 19zM5.500 1V10H17.500V1M7 22V14.500H16V22M12 18V22" fill="none" stroke="#fff" stroke-width="1.800"/>`, "save")}
      ${icon(21, 22, svg`<path d="M1.500 1V8.500H9M2 8C6 0 17-1 19 6c1 6-5 9-10 15.500" fill="none" stroke="#6f6e6d" stroke-width="1.700"/>`, "undo")}
      ${icon(21, 22, svg`<path d="M19.500 1V8.500H12M19 8C15 0 4-1 2 6c-1 6 5 9 10 15.500" fill="none" stroke="#6f6e6d" stroke-width="1.700"/>`, "redo")}
      ${t("Call Center Dashboard • Last saved: Today at 9:55 PM", 425, "name")}
      ${icon(13, 7, svg`<path d="M0 0H13L6.500 7z" fill="#fff"/>`, "caret")}
      <div class="search row">
        ${icon(24, 24, svg`<circle cx="15" cy="8.500" r="7.800" fill="none" stroke="#3b3a39" stroke-width="1.600"/><path d="M9.500 14L1 23" stroke="#3b3a39" stroke-width="1.600"/>`)}
        ${t("Search", 61)}
      </div>
      ${t("Sign in", 54, "sign")}
      ${icon(30, 30, svg`<circle cx="15" cy="15" r="15" fill="#f3f2f1"/><circle cx="15" cy="8" r="4.500" fill="none" stroke="#111" stroke-width="1.800"/><path d="M8 15.500H22q2 0 2 2c0 5-4 8-9 8s-9-3-9-8q0-2 2-2z" fill="none" stroke="#111" stroke-width="1.800"/>`, "avatar")}
      ${icon(16, 2, svg`<path d="M0 1H16" stroke="#fff" stroke-width="1.500"/>`, "wmin")}
      ${icon(16, 16, svg`<rect x="1" y="1" width="14" height="14" rx="2" fill="none" stroke="#fff" stroke-width="1.500"/>`, "wmax")}
      ${icon(16, 16, svg`<path d="M1 1L15 15M15 1L1 15" stroke="#fff" stroke-width="1.500"/>`, "wclose")}
    </div>`;
  }

  private menu() {
    const tabs: [string, number, number][] = [["File", 34, 31], ["Home", 56, 58], ["Insert", 47, 51], ["Modeling", 48, 88], ["View", 48, 45], ["Optimize", 46, 85], ["Help", 47, 43]];
    return html`<div class="menu">
      ${tabs.map(([n, gap, w]) => html`<div style="margin-left:${gap}px;width:${w}px" class="tab ${n === "Home" ? "on" : ""}">${t(n, w)}</div>`)}
      <div class="share row">
        ${icon(24, 22, svg`<path d="M7 6H1.500V20.500H19V16M5 16C6 10 9 7.500 15 7.500V2l8 7.500-8 7V11.500C11 11 8 12 5 16z" fill="none" stroke="#fff" stroke-width="1.600"/>`)}
        ${t("Share", 44)} ${chev(16, 10, "#fff", 1.8)}
      </div>
    </div>`;
  }

  private ribbon() {
    const line = ([s, w, c]: [string, number, boolean?]) =>
      html`<div class="ln row">${s ? t(s, w) : nothing}${c ? icon(9, 6, svg`<path d="M.500.500L4.500 5 8.500.500" fill="none" stroke="currentColor" stroke-width="1.800"/>`) : nothing}</div>`;
    return html`<div class="ribbon">
      <div class="grp clip">
        <div class="cols off">
          <div class="paste item">
            ${icon(50, 50, svg`<path d="M11 9H8V44H27M33 9H39V20" fill="none" stroke="#f5cfa6" stroke-width="4"/><path d="M14 14V9h5q5-8 9 0h5v5z" fill="#fafafa" stroke="#b5b3b1" stroke-width="1.800"/><rect x="28" y="22" width="20" height="26" fill="#fafafa" stroke="#b5b3b1" stroke-width="1.800"/>`)}
            <div class="ln row">${t("Paste", 42)}</div>
          </div>
          <div class="acts">
            <div class="row">${icon(24, 26, svg`<path d="M7 1L15 18M17 1L9 18" stroke="#b5b3b1" stroke-width="1.600"/><circle cx="7.500" cy="21" r="3.200" fill="none" stroke="#9cc9e6" stroke-width="1.800"/><circle cx="16.500" cy="21" r="3.200" fill="none" stroke="#9cc9e6" stroke-width="1.800"/>`)}${t("Cut", 28)}</div>
            <div class="row">${icon(24, 26, svg`<g fill="#fafafa" stroke="#b5b3b1" stroke-width="1.600"><path d="M9 21H1V1H9l3 3"/><path d="M10 5H18l5 5V24.500H10zM18 5V10H23M13 15h7M13 19h7"/></g>`)}${t("Copy", 41)}</div>
            <div class="row">${icon(24, 26, svg`<path d="M1 12L10 6 18 15 11 24z" fill="#fde9c8" stroke="#f2c490" stroke-width="1.600"/><path d="M9 7L18 16M12 8l4-3 4-4q3-1 3 3l-5 4-1 4z" fill="#fafafa" stroke="#b5b3b1" stroke-width="1.600"/>`)}${t("Format painter", 117)}</div>
          </div>
        </div>
        <div class="glabel">${t("Clipboard", 64)}</div>
      </div>
      ${dataGroups.map((g) => html`<div class="grp" style="width:${g.w}px">
        <div class="items" style="padding-left:${g.pad}px">
          ${g.items.map((i) => html`<div class="item ${i.off ? "off" : ""}" style="width:${i.w}px">${icon(50, 50, i.art)}${i.lines.map(line)}</div>`)}
        </div>
        <div class="glabel">${t(g.label, g.lw)}</div>
      </div>`)}
      ${icon(13, 8, svg`<path d="M1 7L6.500 1.500 12 7" fill="none" stroke="#252423" stroke-width="2.300"/>`, "collapse")}
    </div>`;
  }

  private rail() {
    const doc = (x: number) => svg`<path d="M${x} 19V4q0-2 2-2h8l7 7v8M${x + 9} 2V9h7" fill="none" stroke="#797775" stroke-width="1.600"/>`;
    return html`<div class="rail">
      <div class="slot on">${icon(21, 21, svg`<path d="M1 0V20H21" fill="none" stroke="#111" stroke-width="1.800"/><path d="M4 5h3v12H4zM10 8h3v9h-3zM16 2h3v15h-3z" fill="none" stroke="#111" stroke-width="1.600"/>`)}</div>
      <div class="slot">${icon(24, 22, svg`<path d="M1 1H23V21H1zM1 5H23M1 10H23M1 15.500H23M8.500 5V21M15.500 5V21" fill="none" stroke="#797775" stroke-width="1.500"/>`)}</div>
      <div class="slot">${icon(28, 28, svg`<path d="M1 9H12V19H1zM1 13H12M16 1H27V11H16zM16 5H27M16 16H27V27H16zM16 20H27M7 9V4H16M7 19V23H16" fill="none" stroke="#797775" stroke-width="1.500"/>`)}</div>
      <div class="slot">${icon(28, 26, svg`${doc(7)}<path d="M26 9q3 8-3 15" fill="none" stroke="#797775" stroke-width="1.500"/><text x="-1" y="25" class="lbl" textLength="22">DAX</text>`)}</div>
      <div class="slot">${icon(28, 26, svg`${doc(6)}<text x="0" y="25" class="lbl" textLength="28">TMDL</text>`)}</div>
    </div>`;
  }

  private sidebar() {
    return html`<div class="side">
      <div class="mh">${t("MENU", 52)}</div>
      <div class="btn home">${t("HOME", 37)}</div>
      <div class="btn grid">${t("GRID", 30)}</div>
      <div class="fh">${t("FILTERS", 80)}</div>
      <div class="fcard date">
        <div class="row h">${t("Date", 25)}${chev(9, 5, "#2d5f92", 1)}</div>
        <div class="row in">${t("01-10-2020", 88)}${calIcon}</div>
        <div class="row in">${t("31-10-2020", 88)}${calIcon}</div>
      </div>
      <div class="fcard chan">
        <div class="row h">${t("Channel", 85)}${chev(16, 9, "#4a6076", 1.3)}</div>
        <div class="sel">${t("All", 21)}${chev(20, 11, "#fff", 1.4)}</div>
      </div>
      <div class="fcard city">
        <div class="row h">${t("City", 33)}${chev(16, 9, "#4a6076", 1.3)}</div>
        <div class="sel">${t("All", 20)}${chev(20, 11, "#fff", 1.4)}</div>
      </div>
    </div>`;
  }

  private report() {
    return html`<div class="report">
      <div class="banner">
        ${t("CALL CENTRE DASHBOARD", 445)}<span class="sp1">|</span>${t("GRID", 85, "gold")}
        <div class="bar"></div>
      </div>
      ${icon(76, 76, svg`
        <g fill="none" stroke-linecap="round">
          <path d="M10 36V30C10 12 22 6 38 6S66 12 66 30V36" stroke="#3f86f7" stroke-width="9"/>
          <path d="M10 36V30C10 12 22 6 38 6S66 12 66 30V36" stroke="#a4c4fb" stroke-width="5"/>
          <path d="M9 34V30C9 18 15 9 26 7" stroke="#fff" stroke-width="2"/>
          <path d="M7 56C9 66 16 70 28 70" stroke="#3f86f7" stroke-width="2.500"/>
        </g>
        <g stroke="#3f86f7" stroke-width="2">
          <rect x="26" y="1.500" width="24" height="8" rx="2" fill="#e7eefe"/>
          <path d="M12 36V56H8Q1 54 1 46T8 36z" fill="#e7eefe"/><path d="M64 36V56H68Q75 54 75 46T68 36z" fill="#e7eefe"/>
          <rect x="11" y="33" width="6" height="26" rx="3" fill="#8fb6fb"/><rect x="59" y="33" width="6" height="26" rx="3" fill="#8fb6fb"/>
          <circle cx="38" cy="46" r="16" fill="#e7eefe" stroke-width="2.500"/>
          <path d="M38 34V46L45 53" fill="none" stroke-width="2.800"/>
          <rect x="29.500" y="66.500" width="18" height="8" rx="4" fill="#a4c4fb"/>
        </g><path d="M34 71h9" stroke="#3f86f7" stroke-width="2" stroke-dasharray="2 1.500"/>`, "logo")}
      <div class="rbody">
        ${this.sidebar()}
        <div class="main">
          <div class="kpis">
            ${kpis.map((k) => html`<div class="kpi">${icon(32, 33, k.art)}<div class="kt" style="padding-left:${k.shift}px">${t(k.title, k.tw)}</div><div class="kv">${t(k.value, k.vw)}</div></div>`)}
          </div>
          <div class="tblwrap">
            <div class="tbl">
              <div class="tr head">
                ${columns.map(([n, w, tw], i) => html`<div class="c ${i === 7 ? "num" : ""}" style="width:${w}px">${t(n, tw)}${i === 1 ? html`<div class="sort"></div>` : nothing}</div>`)}
              </div>
              ${rows.map((r, ri) => html`<div class="tr r${ri % 2}">
                ${r.map((v, i) => html`<div class="c ${i === 7 ? "num" : ""}" style="width:${columns[i][1]}px">${i === 0 ? t(v, idWidths[ri]) : v}</div>`)}
              </div>`)}
            </div>
            <div class="vs"></div>
          </div>
          <div class="hs"></div>
        </div>
      </div>
    </div>`;
  }

  private pages() {
    return html`<div class="pages">
      <div class="dev">${icon(29, 21, svg`<path d="M1 1H28V16H1zM14.500 16V20M9 20.500H20" fill="none" stroke="#484644" stroke-width="1.800"/>`)}</div>
      ${icon(19, 30, svg`<rect x="1" y="1" width="17" height="28" rx="1.500" fill="none" stroke="#484644" stroke-width="1.900"/><path d="M8 25H12" stroke="#484644" stroke-width="1.600"/>`, "ph")}
      ${icon(6, 13, svg`<path d="M6 0V13L0 6.500z" fill="#c8c6c4"/>`, "a1")}
      ${icon(6, 13, svg`<path d="M0 0V13L6 6.500z" fill="#c8c6c4"/>`, "a2")}
      <div class="pg p1">${t("HOME", 51)}</div>
      <div class="pg p2">${t("GRID", 41)}<span class="x">x</span></div>
      <div class="add">${icon(16, 16, svg`<path d="M8 0V16M0 8H16" stroke="#fff" stroke-width="4"/>`)}</div>
    </div>`;
  }

  private visualPane() {
    return html`<div class="pane">
      <h2>${t("Visualizations", 148)}${icon(19, 19, svg`<path d="M1 1L9 9.500 1 18M10 1L18 9.500 10 18" fill="none" stroke="#252423" stroke-width="1.700"/>`)}</h2>
      <div class="build">${t("Build visual", 92)}</div>
      <div class="modes">
        <div class="mode">${icon(36, 36, svg`<path d="M0 1.500H29" stroke="#252423" stroke-width="2"/><path d="M1 8H35V19H1zM1 24.500H35V35H1z" fill="#117865" stroke="#111" stroke-width="1.800" stroke-dasharray="2.500 1.500"/>`)}</div>
        ${icon(36, 36, svg`<path d="M26 15V11L16 1H1V35H6" fill="#fff" stroke="#252423" stroke-width="1.900"/><path d="M16 1V11H26" fill="none" stroke="#252423" stroke-width="1.900"/><path d="M19 26C24 20 30 15 36 13 34 19 28 25 23 29z" fill="#fff" stroke="#252423" stroke-width="1.800"/><path d="M19 26q4 1 4 4-3 6-15 4 6-1 7-5 1-3 4-3z" fill="#fff" stroke="#252423" stroke-width="1.800"/>`, "fmt")}
      </div>
      ${icon(270, 13, svg`<path d="M0 12H24L36 .500 48 12H270" fill="none" stroke="#8a8886" stroke-width="1.500"/>`, "notch")}
      <div class="gallery">${visuals.map((v) => icon(28, 28, v))}</div>
      <div class="wells">
        <div class="wl">
          <div class="v">${t("Values", 50)}</div>
          <div class="drop">${t("Add data fields here", 160)}</div>
          <div class="drill">${t("Drill through", 104)}</div>
          <div class="tg">${t("Cross-report", 100)}<div class="sw"><i></i>${t("Off", 20)}</div></div>
          <div class="tg">${t("Keep all filters", 111)}<div class="sw on">${t("On", 18)}<i></i></div></div>
        </div>
        <div class="wsb"></div>
      </div>
    </div>`;
  }

  private dataPane() {
    const ch = icon(10, 18, svg`<path d="M1 1L9 9 1 17" fill="none" stroke="#484644" stroke-width="1.400"/>`);
    const tb = (extra: SVGTemplateResult | typeof nothing) => icon(19, 19, svg`<rect x="1" y="1" width="17" height="17" rx="4" fill="none" stroke="#252423" stroke-width="1.600"/><path d="M1 6.500H18M1 12.500H18M6.500 1V18M12.500 1V18" stroke="#252423" stroke-width="1.400"/>${extra}`);
    return html`<div class="pane">
      <h2>${t("Data", 50)}${icon(19, 19, svg`<path d="M1 1L9 9.500 1 18M10 1L18 9.500 10 18" fill="none" stroke="#252423" stroke-width="1.700"/>`)}</h2>
      <div class="dsearch row">${icon(22, 22, svg`<circle cx="9" cy="9" r="8" fill="none" stroke="#605e5c" stroke-width="1.500"/><path d="M14.500 14.500L21 21" stroke="#605e5c" stroke-width="1.500"/>`)}${t("Search", 61)}</div>
      <div class="tree">
        <div class="row">${ch}${tb(nothing)}${t("call center", 80)}</div>
        <div class="row">${ch}${tb(svg`<rect x="10" y="6" width="12" height="16" fill="#f3f2f1"/><rect x="12" y="7" width="9" height="14" rx="1.500" fill="#fff" stroke="#252423" stroke-width="1.600"/><path d="M12 11.500H21M15 14.500h3M15 17.500h3" stroke="#252423" stroke-width="1.400"/>`)}${t("DateMaster", 92)}</div>
      </div>
    </div>`;
  }

  private taskbar() {
    return html`<div class="task">
      <div class="wx row">
        ${icon(36, 40, svg`<defs><linearGradient id="cl" x1="0" y1="0" x2="0" y2="1"><stop offset="0" stop-color="#a9c4f4"/><stop offset="1" stop-color="#dbe8fd"/></linearGradient></defs>
          <path d="M0 18C10 18 15 12 14 4c8 4 10 16 2 22-6 4-14 0-16-8z" fill="#f5a623"/>
          <path d="M8 36a8 7.500 0 0 1-1-15 9.500 9.500 0 0 1 18-2 8.500 8.500 0 0 1 3 17z" fill="url(#cl)" stroke="#7fa5e8"/>
          <circle cx="28.500" cy="5.500" r="12" fill="#c42b1c"/><text x="28.500" y="11.500" text-anchor="middle" font-size="16" fill="#fff">7</text>`)}
        <div class="two">${t("28°C", 37)}${t("Mostly cloudy", 113, "mut")}</div>
      </div>
      <div class="slot66">${icon(35, 35, svg`<defs><linearGradient id="wn" x1="0" y1="0" x2="1" y2="1"><stop offset="0" stop-color="#4cc6fb"/><stop offset="1" stop-color="#0067c7"/></linearGradient></defs><path d="M0 0H17V17H0zM18 0H35V17H18zM0 18H17V35H0zM18 18H35V35H18z" fill="url(#wn)"/>`)}</div>
      <div class="tsearch row">${icon(23, 23, svg`<circle cx="10" cy="10" r="8.500" fill="none" stroke="#1b1b1b" stroke-width="2"/><path d="M16 16L22 22" stroke="#1b1b1b" stroke-width="2.600"/>`)}${t("Search", 61)}</div>
      <div class="slot66">${icon(36, 34, svg`<defs><linearGradient id="tv" x1="0" y1="0" x2="0" y2="1"><stop offset="0" stop-color="#555"/><stop offset="1" stop-color="#1a1a1a"/></linearGradient></defs><rect x="0" y="9" width="26" height="24" rx="2" fill="url(#tv)"/><rect x="9" y="0" width="27" height="24" rx="2" fill="#fff" fill-opacity=".72" stroke="#ddd" stroke-width=".8"/>`)}</div>
      <div class="slot66">${icon(36, 34, svg`<path d="M0 2q0-2 2-2H11l4 4V10H0z" fill="#e0a008"/><path d="M0 8H13L17 4H36V32q0 1-1 1H1q-1 0-1-1z" fill="#ffd24a"/><path d="M7 33V26q0-4 4-4H26q4 0 4 4V33z" fill="#1679ce"/><path d="M12 27.500H25" stroke="#0a4f93" stroke-width="2"/>`)}<i class="dot"></i></div>
      <div class="slot66">${icon(35, 35, svg`<defs><linearGradient id="st" x1="0" y1="0" x2="0" y2="1"><stop offset="0" stop-color="#0f7cc9"/><stop offset="1" stop-color="#243a63"/></linearGradient></defs><path d="M9 6V1.500H26V6" fill="none" stroke="#35b5ec" stroke-width="2.500"/><path d="M0 5H35V31q0 4-4 4H4q-4 0-4-4z" fill="url(#st)"/><path d="M10 12h7v7h-7z" fill="#f25022"/><path d="M18 12h7v7h-7z" fill="#7fba00"/><path d="M10 20h7v7h-7z" fill="#00a4ef"/><path d="M18 20h7v7h-7z" fill="#ffb900"/>`)}</div>
      <div class="slot66">${icon(36, 34, copilot("tb"), "", "0 0 46 44")}</div>
      <div class="slot66">${icon(36, 36, svg`<defs><linearGradient id="eg" x1="0" y1="0" x2="1" y2=".6"><stop offset="0" stop-color="#1b9de2"/><stop offset=".6" stop-color="#35c1c9"/><stop offset="1" stop-color="#6fdc5a"/></linearGradient></defs><path d="M1 24C-2 8 8 0 18 0S36 7 36 16c0 6-5 9-10 8-3-1-4-2-2-5 1-3-2-6-6-6C8 13 3 18 1 24z" fill="url(#eg)"/><path d="M1 24C4 14 11 11 18 13c-4 3-4 8-1 12 4 4 10 5 17 2-4 7-12 10-19 8C7 33 1 29 1 24z" fill="#0c59a4"/><path d="M0 25h18v11H0zM5 25v-2h8v2" fill="#d98a1a" stroke="#7a4300"/><path d="M0 29H18" stroke="#7a4300"/>`)}</div>
      <div class="slot66">${icon(36, 36, svg`<circle cx="18" cy="18" r="18" fill="#fcc31e"/><path d="M18 18L2.400 9A18 18 0 0 0 16 35.900L24 23z" fill="#2ba24c"/><path d="M18 10H33.600A18 18 0 0 0 2.400 9L10 22z" fill="#e33b2e"/><circle cx="18" cy="18" r="8.500" fill="#fff"/><circle cx="18" cy="18" r="6.700" fill="#2f7de9"/><circle cx="31.500" cy="4" r="12" fill="#8f9699"/><path d="M27-3q8-3 9 3-5 4-1 8-4 5-8 2-2-6 0-13z" fill="#aeb4b6"/>`)}<i class="dot"></i></div>
      <div class="slot66">${icon(36, 36, svg`<path d="M2 34L4.500 26A16 16 0 1 1 10 31.500z" fill="#fff" stroke="#1f8f55" stroke-width="3"/><path d="M11 10c2-2 4-1 4.500 1l1 3c0 1-2 2-1 3 2 3 3 4 6 5 1 0 2-2 3-2l3 2c2 1 1 3-1 4-4 2-9-1-12-4s-7-8-3.500-12z" fill="#1f8f55"/><circle cx="32.500" cy="4" r="12" fill="#0078d4"/><text x="32.500" y="9.500" text-anchor="middle" font-size="15.500" fill="#fff">5</text>`)}<i class="dot"></i></div>
      <div class="slot66"><div class="tile">${icon(28, 36, svg`<defs><linearGradient id="pb" x1="0" y1="0" x2="0" y2="1"><stop offset="0" stop-color="#e8ac14"/><stop offset="1" stop-color="#c87a0c"/></linearGradient></defs><rect x="15" y="0" width="13" height="36" rx="1" fill="url(#pb)"/><rect x="8" y="9" width="12" height="27" rx="1" fill="#ecbc2c"/><rect x="0" y="18" width="12" height="18" rx="1" fill="#f6dc68"/>`)}<b></b></div></div>
      <div class="slot48" style="margin-left:87px">${icon(16, 9, svg`<path d="M1 8L8 1.500 15 8" fill="none" stroke="#1b1b1b" stroke-width="1.800"/>`)}</div>
      <div class="slot48">${icon(25, 16, svg`<path d="M5 16a5 5 0 0 1-1-9A8.500 8.500 0 0 1 19 5a6 6 0 0 1 1 11z" fill="#0a64bd"/><path d="M5 16a5 5 0 0 1-1-9q4-1 7 2l9 7z" fill="#1490df"/><path d="M6 16L14 9q5-3 9-1a5 5 0 0 1-3 8z" fill="#28a8ea"/>`)}</div>
      <div class="two lang">${t("ENG", 34)}${t("IN", 17)}</div>
      <div class="quick row">
        ${icon(24, 18, svg`<g fill="none" stroke="#1b1b1b" stroke-width="1.700"><path d="M1 7Q12-4 23 7M4.500 10.500Q12 3 19.500 10.500M8 13.500Q12 9.500 16 13.500"/></g><circle cx="12" cy="16" r="2" fill="#1b1b1b"/>`)}
        ${icon(24, 20, svg`<path d="M1 7H5L10 2V18L5 13H1z" fill="none" stroke="#1b1b1b" stroke-width="1.600"/><path d="M13 6.500q3 3.500 0 7M16 4q5 6 0 12" fill="none" stroke="#1b1b1b" stroke-width="1.600"/><path d="M19.500 1.500q7 8 0 17" fill="none" stroke="#bbb" stroke-width="1.600"/>`)}
        ${icon(24, 20, svg`<path d="M13 4H20q2 0 2 2V15q0 2-2 2H3q-2 0-2-2" fill="none" stroke="#1b1b1b" stroke-width="1.800"/><path d="M23 8v5" stroke="#1b1b1b" stroke-width="2.500"/><path d="M8-1Q13 5 12 10 10 14 4 13-2 8 8-1z" fill="#1b1b1b"/><path d="M3 17L9 6" stroke="#f8f8f8"/><path d="M14 8v6h-6" fill="none" stroke="#1b1b1b" stroke-width="1.500"/>`)}
      </div>
      <div class="two clock">${t("22:05", 43)}${t("28-04-2025", 93)}</div>
    </div>`;
  }

  render(): TemplateResult {
    return html`<div class="app">
      ${this.titleBar()} ${this.menu()} ${this.ribbon()}
      <div class="work">
        ${this.rail()}
        <div class="center">
          <div class="stage">
            <div class="dots">${this.report()}</div>
            <div class="filters">
              ${icon(19, 19, svg`<path d="M9 1L1 9.500 9 18M18 1L10 9.500 18 18" fill="none" stroke="#252423" stroke-width="1.700"/>`, "ar")}
              ${icon(17, 18, svg`<path d="M16 1V17L7 11.500H1V6.500H7z" fill="none" stroke="#252423" stroke-width="1.700"/>`, "fn")}
              <div class="vt">Filters</div>
            </div>
          </div>
          ${this.pages()}
        </div>
        ${this.visualPane()} ${this.dataPane()}
      </div>
      <div class="status">
        ${t("Page 2 of 2", 88)}
        ${icon(290, 28, svg`<path d="M0 14.500H5M172 14.500H183M177.500 9V20" stroke="#484644" stroke-width="2"/><path d="M13 14H163M88 11V19" stroke="#484644" stroke-width="1.500"/><rect x="53" y="9" width="6" height="14" fill="#605e5c"/><text x="203" y="18.500" font-size="16.500" fill="#484644" textLength="34">62%</text><rect x="267" y="2" width="22" height="21" fill="#f8f8f8" stroke="#605e5c" stroke-width="1.800"/><path d="M271 10V6h4M281 6h4v4M271 15v4h4M281 19h4v-4" fill="none" stroke="#484644" stroke-width="1.500"/>`, "sl")}
      </div>
      ${this.taskbar()}
      <div class="tip">${t("Battery status: 63% remaining", 241)}<br />${t("Energy saver on", 129)}</div>
    </div>`;
  }
}
